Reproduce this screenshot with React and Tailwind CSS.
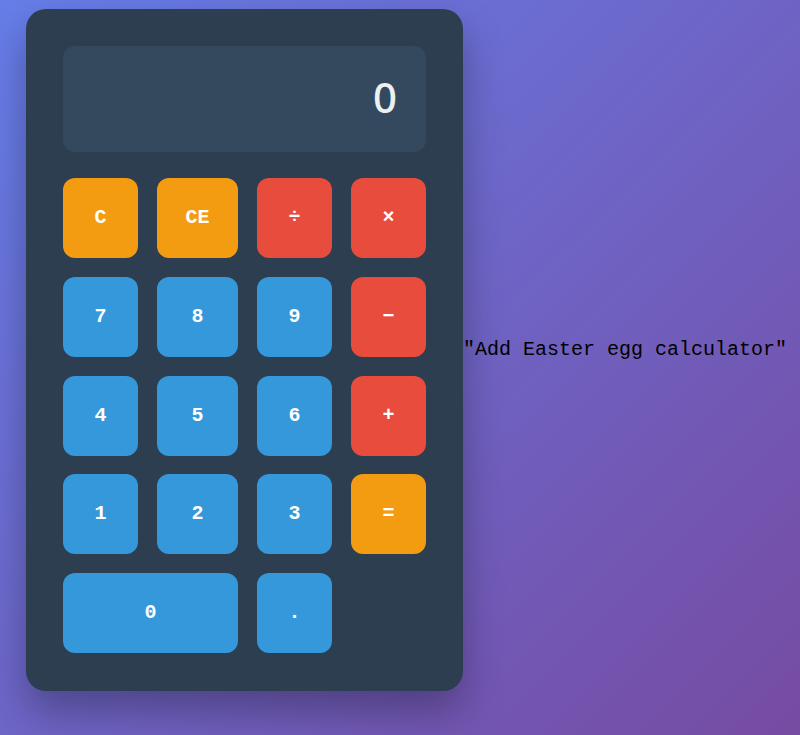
import React, { useState } from 'react'

const keys = [
    { label: 'C', kind: 'clear' },
    { label: 'CE', kind: 'clear' },
    { label: '÷', kind: 'op' },
    { label: '×', kind: 'op' },
    { label: '7', kind: 'num' },
    { label: '8', kind: 'num' },
    { label: '9', kind: 'num' },
    { label: '−', kind: 'op' },
    { label: '4', kind: 'num' },
    { label: '5', kind: 'num' },
    { label: '6', kind: 'num' },
    { label: '+', kind: 'op' },
    { label: '1', kind: 'num' },
    { label: '2', kind: 'num' },
    { label: '3', kind: 'num' },
    { label: '=', kind: 'clear' },
    { label: '0', kind: 'num', wide: true },
    { label: '.', kind: 'num' },
]

const kindClass = {
    clear: 'bg-[#f39c12]',
    op: 'bg-[#e74c3c]',
    num: 'bg-[#3498db]',
}

const App = () => {
    const [display, setDisplay] = useState('0')

    const press = (label) => {
        if (label === 'C' || label === 'CE') return setDisplay('0')
        if (/[0-9.]/.test(label)) setDisplay((d) => (d === '0' && label !== '.' ? label : d + label))
    }

    return (
        <div className="min-h-[735px] bg-[linear-gradient(135deg,#667eea_0%,#764ba2_100%)] pt-[9px] pl-[26px]">
            <div className="flex items-center">
                {/* calculator */}
                <div className="w-[437px] shrink-0 rounded-[20px] bg-[#2c3e50] px-[37px] pt-[37px] pb-[38px] shadow-[0_20px_40px_rgba(0,0,0,0.3)]">
                    <div className="mb-[26px] flex h-[106px] items-center justify-end rounded-[12px] bg-[#34495e] pr-[29px] pb-[6px] font-['Noto_Sans',sans-serif] text-[42px] font-medium text-[#ecf0f1]">
                        {display}
                    </div>
                    <div className="grid grid-cols-[75px_81px_75px_75px] gap-x-[19px] gap-y-[18.75px]">
                        {keys.map((k) => (
                            <button
                                key={k.label}
                                onClick={() => press(k.label)}
                                className={`${kindClass[k.kind]} ${k.wide ? 'col-span-2' : ''} flex h-[80px] items-center justify-center rounded-[12px] font-['Liberation_Mono',monospace] text-[20px] font-bold text-white`}
                            >
                                {k.label}
                            </button>
                        ))}
                    </div>
                </div>
                <span className="whitespace-nowrap font-['Liberation_Mono',monospace] text-[20px] text-black">
                    "Add Easter egg calculator"
                </span>
            </div>
        </div>
    )
}

export default App
